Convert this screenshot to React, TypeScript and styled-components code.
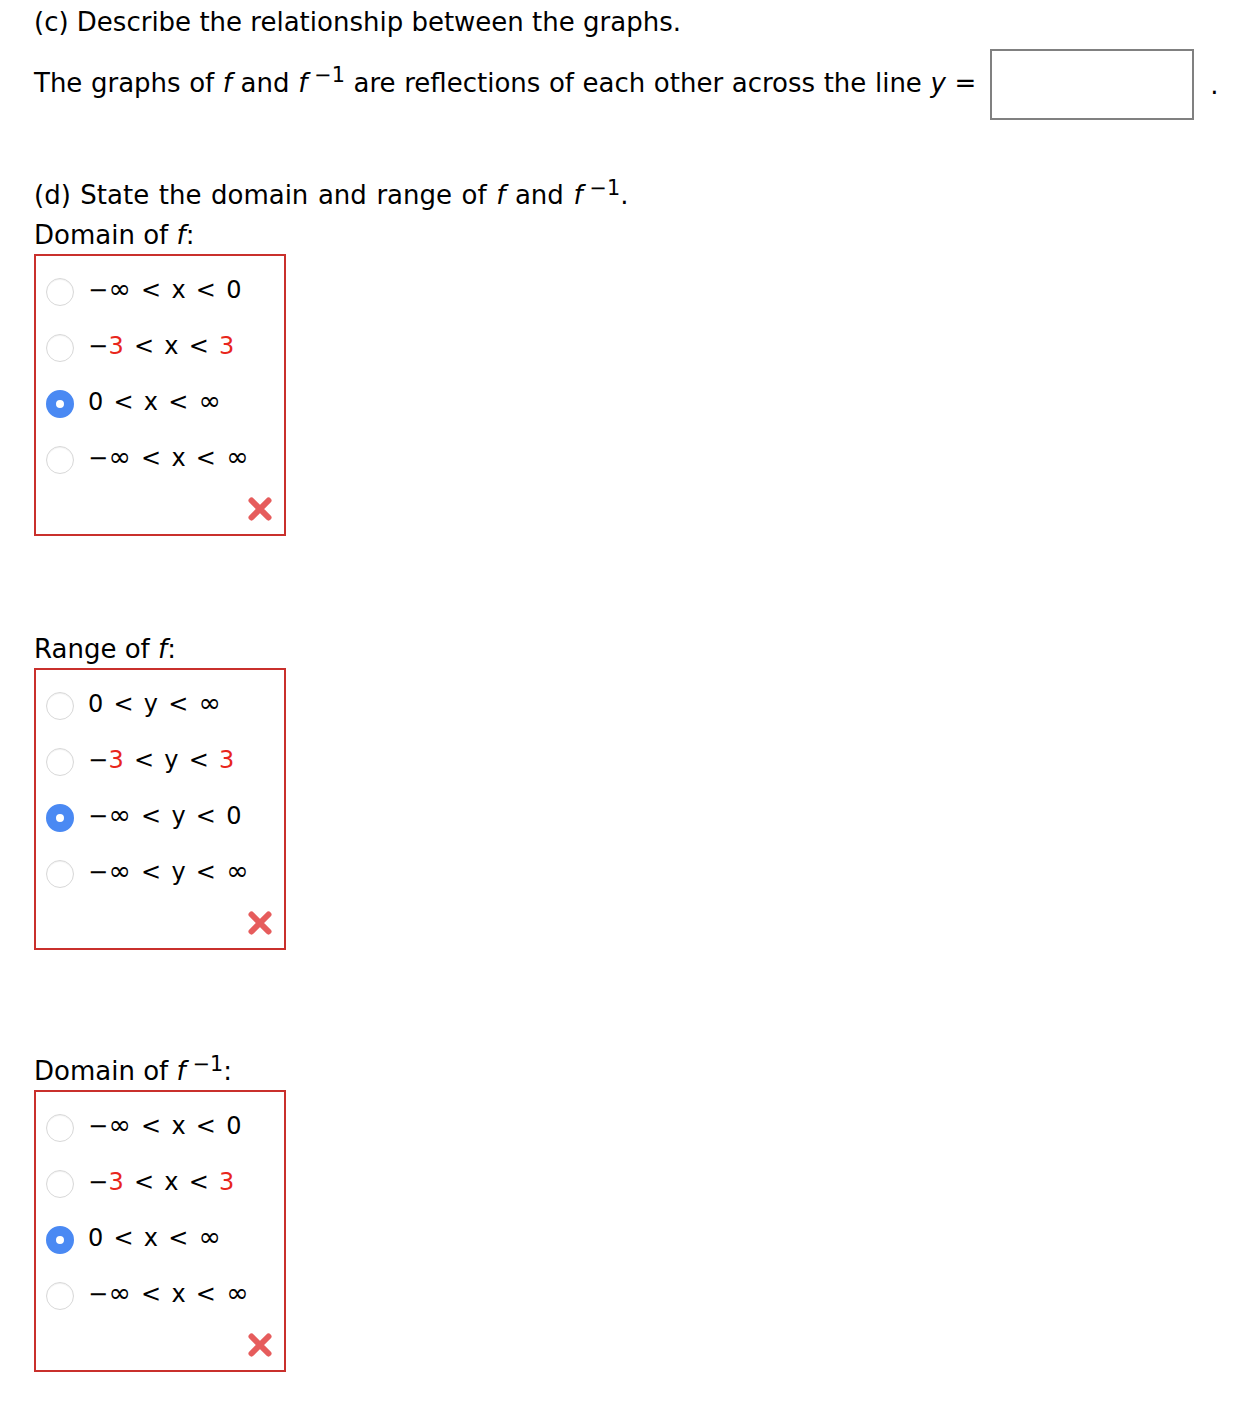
import React from 'react'
import styled, { createGlobalStyle } from 'styled-components'

const GlobalStyle = createGlobalStyle`
	body {
		margin: 0;
		background: #fff;
		color: #000;
		font-family: 'DejaVu Sans', Verdana, sans-serif;
	}
`

const Page = styled.div`
	padding: 6px 34px 30px;
	font-size: 26px;
`

const Heading = styled.div<{ gap?: number; spread?: number }>`
	margin-top: ${({ gap }) => gap ?? 0}px;
	line-height: 32px;
	word-spacing: ${({ spread }) => spread ?? 0}px;
`

const AnswerLine = styled.div`
	display: flex;
	align-items: center;
	margin-top: 11px;
	line-height: 32px;
`

const AnswerText = styled.span`
	margin-top: -4px;
	word-spacing: 0.33px;
`

const AnswerBox = styled.div`
	width: 200px;
	height: 67px;
	margin-left: 14px;
	border: 2px solid #808080;
`

const Period = styled.span`
	margin-left: 16px;
`

const Var = styled.i`
	font-style: italic;
`

const Sup = styled.sup`
	font-size: 0.8em;
	vertical-align: 0.45em;
	line-height: 0;
	margin-left: 7px;
`

const Label = styled.div<{ gap: number }>`
	margin-top: ${({ gap }) => gap}px;
	line-height: 30px;
`

const ChoiceBox = styled.div`
	width: 248px;
	height: 278px;
	margin-top: 4px;
	border: 2px solid #c9302c;
	display: flex;
	flex-direction: column;
	position: relative;
`

const Option = styled.div`
	display: flex;
	align-items: center;
	height: 56px;
	padding-left: 10px;
	font-size: 24px;
	&:first-child {
		margin-top: 6px;
	}
`

const Radio = styled.span<{ checked: boolean }>`
	box-sizing: border-box;
	width: 28px;
	height: 28px;
	border-radius: 50%;
	flex: none;
	margin-top: 4px;
	margin-right: 14px;
	border: ${({ checked }) => (checked ? '10px solid #4a89f3' : '1px solid #d8d8d8')};
	box-shadow: ${({ checked }) => (checked ? 'none' : 'inset 0 1px 1px rgba(0,0,0,0.06)')};
	background: #fff;
`

const OptText = styled.span`
	word-spacing: 2px;
	letter-spacing: 0.3px;
`

const Red = styled.span`
	color: #e8261c;
`

const Inf = styled.span`
	font-size: 1.12em;
	line-height: 0;
`

const Mark = styled.svg`
	position: absolute;
	right: 11px;
	bottom: 12px;
	filter: blur(0.5px);
`

const WrongMark = () => (
	<Mark width="26" height="26" viewBox="0 0 26 26">
		<path
			d="M4.5 4.5 L21.5 21.5 M21.5 4.5 L4.5 21.5"
			stroke="#e65c5c"
			strokeWidth="6"
			strokeLinecap="round"
		/>
	</Mark>
)

type Opt = { parts: (string | { red: string })[]; checked?: boolean }

const withInfinity = (s: string) =>
	s.split('∞').flatMap((chunk, i) => (i === 0 ? [chunk] : [<Inf key={i}>∞</Inf>, chunk]))

const renderParts = (parts: Opt['parts']) =>
	parts.map((p, i) =>
		typeof p === 'string' ? (
			<span key={i}>{withInfinity(p)}</span>
		) : (
			<Red key={i}>{p.red}</Red>
		)
	)

const ChoiceGroup = ({ options }: { options: Opt[] }) => (
	<ChoiceBox>
		{options.map((o, i) => (
			<Option key={i}>
				<Radio checked={!!o.checked} />
				<OptText>{renderParts(o.parts)}</OptText>
			</Option>
		))}
		<WrongMark />
	</ChoiceBox>
)

const xOptions: Opt[] = [
	{ parts: ['−∞ < x < 0'] },
	{ parts: ['−', { red: '3' }, ' < x < ', { red: '3' }] },
	{ parts: ['0 < x < ∞'], checked: true },
	{ parts: ['−∞ < x < ∞'] },
]

const yOptions: Opt[] = [
	{ parts: ['0 < y < ∞'] },
	{ parts: ['−', { red: '3' }, ' < y < ', { red: '3' }] },
	{ parts: ['−∞ < y < 0'], checked: true },
	{ parts: ['−∞ < y < ∞'] },
]

export default function App() {
	return (
		<>
			<GlobalStyle />
			<Page>
				<Heading>(c) Describe the relationship between the graphs.</Heading>
				<AnswerLine>
					<AnswerText>
						The graphs of <Var>f</Var> and <Var>f</Var>
						<Sup>−1</Sup> are reflections of each other across the line{' '}
						<Var>y</Var> =
					</AnswerText>
					<AnswerBox />
					<Period>.</Period>
				</AnswerLine>
				<Heading gap={59} spread={1.3}>
					(d) State the domain and range of <Var>f</Var> and <Var>f</Var>
					<Sup>−1</Sup>.
				</Heading>
				<Label gap={9}>
					Domain of <Var>f</Var>:
				</Label>
				<ChoiceGroup options={xOptions} />
				<Label gap={98}>
					Range of <Var>f</Var>:
				</Label>
				<ChoiceGroup options={yOptions} />
				<Label gap={106}>
					Domain of <Var>f</Var>
					<Sup>−1</Sup>:
				</Label>
				<ChoiceGroup options={xOptions} />
			</Page>
		</>
	)
}
